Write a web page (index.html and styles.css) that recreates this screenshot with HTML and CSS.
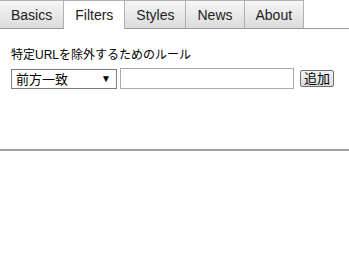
FILE: index.html
```html
<!DOCTYPE html>
<html lang="ja">
<head>
  <meta charset="UTF-8" />
  <title>Options</title>
  <link rel="stylesheet" href="styles.css">
</head>
<body>
  <div class="tabs">
    <div class="tab">Basics</div>
    <div class="tab active">Filters</div>
    <div class="tab">Styles</div>
    <div class="tab">News</div>
    <div class="tab">About</div>
    <div class="tab-rest"></div>
  </div>

  <div class="panel">
    <p class="label">特定URLを除外するためのルール</p>
    <div class="rule-row">
      <div class="select"><span>前方一致</span><span class="arrow">▼</span></div>
      <input type="text" class="pattern" />
      <button class="btn-add">追加</button>
    </div>
  </div>
</body>
</html>
```

FILE: styles.css
```css
body {
  margin: 0;
  font-family: "Liberation Sans", Arial, "Noto Sans CJK JP", sans-serif;
  background: #fff;
  color: #000;
}
.tabs {
  display: flex;
  height: 29px;
}
.tab {
  box-sizing: border-box;
  height: 29px;
  padding: 6px 11px 0;
  font-size: 14px;
  color: #222;
  background: linear-gradient(#f6f6f6, #dcdcdc);
  border: 1px solid #b0b0b0;
  border-left: none;
  border-bottom-color: #999;
}
.tab.active {
  background: #fff;
  border-bottom-color: #fff;
}
.tab-rest {
  flex: 1;
  border-bottom: 1px solid #999;
}
.panel {
  height: 120px;
  padding: 0 11px;
  border-bottom: 2px solid #a0a0a0;
}
.label {
  margin: 0;
  padding-top: 19px;
  font-size: 12px;
  line-height: 15px;
}
.rule-row {
  display: flex;
  align-items: center;
  margin-top: 5px;
}
.select {
  box-sizing: border-box;
  width: 106px;
  height: 20px;
  display: flex;
  justify-content: space-between;
  align-items: center;
  padding: 0 5px 0 4px;
  border: 1px solid #7a7a7a;
  font-size: 13px;
}
.select .arrow {
  font-size: 10px;
}
.pattern {
  box-sizing: border-box;
  width: 174px;
  height: 21px;
  margin: 0 0 0 3px;
  border: 1px solid #a9a9a9;
}
.btn-add {
  height: 17px;
  margin-left: 6px;
  padding: 0 3px;
  font-family: inherit;
  font-size: 13px;
  line-height: 13px;
  border: 1px solid #707070;
  border-radius: 2px;
  background: linear-gradient(#f2f2f2, #dcdcdc);
}
```
